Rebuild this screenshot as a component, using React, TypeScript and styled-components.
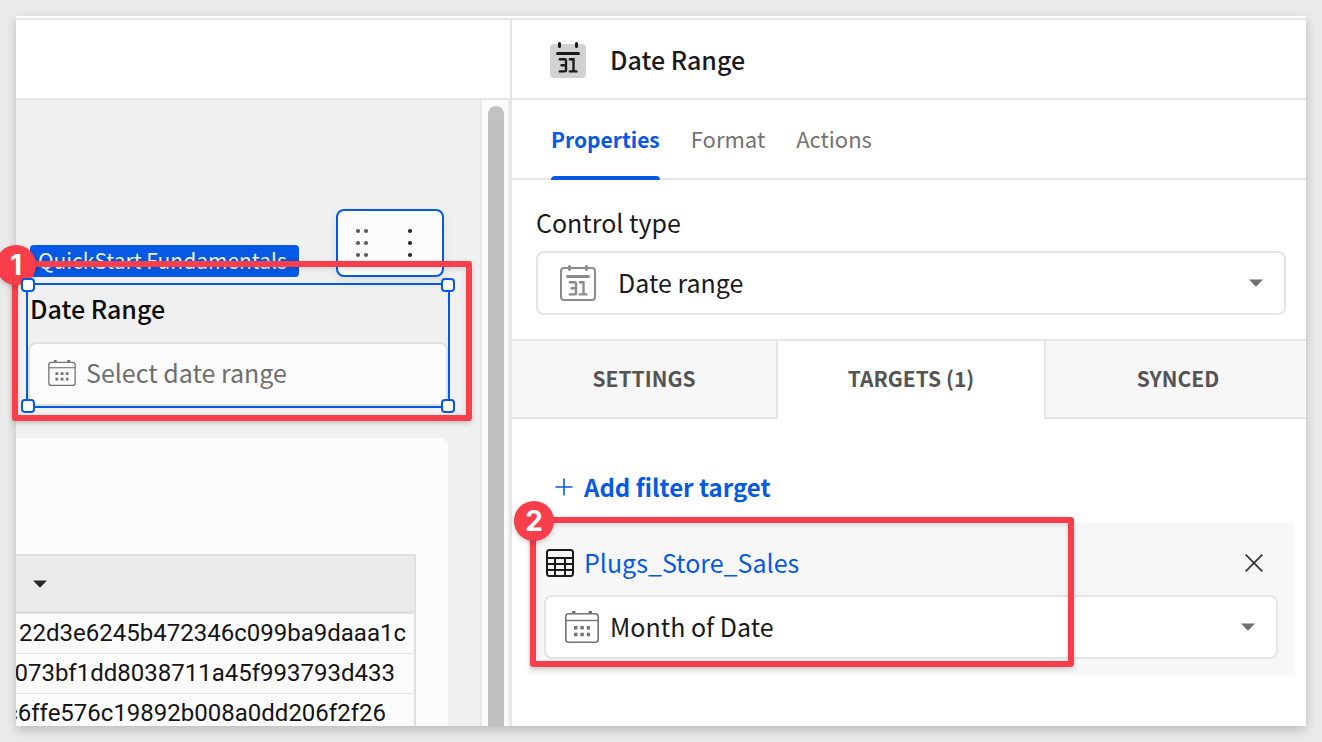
import React from 'react';
import styled, { createGlobalStyle, css } from 'styled-components';

const BLUE = '#0559e5';
const RED = '#f83e4b';
const LINE = '#e5e5e5';

const GlobalStyle = createGlobalStyle`
  *, *::before, *::after { box-sizing: border-box; }
  body {
    margin: 0;
    background: #eaeaea;
    color: #1a1a1a;
    font-family: "Noto Sans CJK SC", "Noto Sans", sans-serif;
    font-size: 25px;
    line-height: 36px;
  }
  button, input, select { font: inherit; color: inherit; margin: 0; }
  button { background: none; border: 0; padding: 0; cursor: pointer; }
  svg { display: block; flex: none; }
`;

const Page = styled.div`
  height: 100vh;
  padding: 16px;
  display: flex;
  flex-direction: column;
`;

const Frame = styled.div`
  flex: 1;
  min-height: 0;
  display: grid;
  grid-template-columns: 496px 1fr;
  padding-top: 2px;
  background: #fff;
  box-shadow: 0 4px 10px rgba(0, 0, 0, 0.2);
`;

const Workspace = styled.section`
  min-height: 0;
  display: flex;
  flex-direction: column;
  border-top: 2px solid ${LINE};
  border-right: 2px solid ${LINE};
`;

const TopBar = styled.header`
  flex: none;
  height: 80px;
  display: flex;
  align-items: center;
  gap: 24px;
  padding: 2px 38px 0;
  border-bottom: 2px solid ${LINE};
`;

const CanvasArea = styled.div`
  flex: 1;
  min-height: 0;
  display: flex;
`;

const Canvas = styled.div`
  flex: 1;
  min-width: 0;
  display: flex;
  flex-direction: column;
  padding-top: 109px;
  background: #f0f0f0;
`;

const ScrollTrack = styled.div`
  width: 30px;
  display: flex;
  padding: 6px 0 0 6px;
  background: #fafafa;
  border-left: 2px solid #e8e8e8;
  border-right: 2px solid #ededed;
`;

const ScrollThumb = styled.div`
  width: 16px;
  border-radius: 8px 8px 0 0;
  background: #c1c1c1;
`;

const WidgetHead = styled.div`
  display: flex;
  align-items: flex-end;
  justify-content: space-between;
  padding: 0 36px 0 14px;
`;

const ParentTag = styled.span`
  height: 32px;
  padding: 0 12px 0 8px;
  border-radius: 4px;
  background: ${BLUE};
  color: #e9f0fd;
  font-size: 21px;
  line-height: 31px;
`;

const WidgetTools = styled.div`
  width: 108px;
  height: 68px;
  display: flex;
  align-items: center;
  gap: 32px;
  padding-left: 16px;
  border: 2px solid ${BLUE};
  border-radius: 8px;
  background: #fbfbfb;
  box-shadow: 0 4px 12px rgba(0, 0, 0, 0.08);
`;

const Selection = styled.div`
  position: relative;
  height: 125px;
  margin: 6px 30px 30px 10px;
  border: 2px solid ${BLUE};
`;

const handlePlace = {
  tl: css`top: -7px; left: -7px;`,
  tr: css`top: -7px; right: -7px;`,
  bl: css`bottom: -7px; left: -7px;`,
  br: css`bottom: -7px; right: -7px;`,
};

const Handle = styled.span<{ $at: keyof typeof handlePlace }>`
  position: absolute;
  width: 14px;
  height: 14px;
  border: 2px solid ${BLUE};
  border-radius: 4px;
  background: #fff;
  ${(p) => handlePlace[p.$at]}
`;

const WidgetLabel = styled.label`
  display: block;
  height: 57px;
  padding: 5px 2px;
  color: #0c0c0c;
  font-weight: 500;
`;

const DateField = styled.div`
  height: 64px;
  display: flex;
  align-items: center;
  gap: 10px;
  padding: 0 18px 2px;
  border: 2px solid #e0e0e0;
  border-radius: 8px;
  background: #fbfbfb;
`;

const DateInput = styled.input`
  flex: 1;
  min-width: 0;
  padding: 0 0 2px;
  border: 0;
  outline: 0;
  background: none;
  &::placeholder { color: #6e6e6e; opacity: 1; }
`;

const TableCard = styled.div`
  flex: 1 1 0;
  min-height: 0;
  overflow: hidden;
  margin-right: 32px;
  padding: 116px 32px 0 0;
  border-radius: 0 8px 0 0;
  background: #fbfbfb;
`;

const DataTable = styled.table`
  width: 100%;
  table-layout: fixed;
  border-collapse: separate;
  border-spacing: 0;
  border-right: 2px solid #e0e0e0;
  font-family: Roboto, sans-serif;
  font-size: 24px;
  line-height: 38px;
`;

const HeadCell = styled.th`
  height: 60px;
  padding: 1px 0 0 17px;
  background: #ebebeb;
  border-top: 2px solid #e0e0e0;
  border-bottom: 3px solid #e0e0e0;
`;

const Cell = styled.td`
  height: 40px;
  padding: 0;
  vertical-align: top;
  border-bottom: 1px solid #e2e2e2;
`;

const CellText = styled.div<{ $end: number }>`
  display: flex;
  justify-content: flex-end;
  overflow: hidden;
  padding-right: ${(p) => p.$end}px;
  color: #141414;
`;

const Inspector = styled.aside`
  min-width: 0;
  display: flex;
  flex-direction: column;
  border-top: 2px solid ${LINE};
`;

const Title = styled.h1`
  margin: 0;
  padding-bottom: 2px;
  font-size: 25px;
  font-weight: 500;
  line-height: 36px;
`;

const Tabs = styled.nav`
  flex: none;
  height: 80px;
  display: flex;
  gap: 31px;
  padding: 0 39px;
  border-bottom: 2px solid ${LINE};
`;

const Tab = styled.button<{ $active?: boolean }>`
  position: relative;
  height: 80px;
  padding-bottom: ${(p) => (p.$active ? 3 : 5)}px;
  font-size: ${(p) => (p.$active ? 21 : 22)}px;
  color: ${(p) => (p.$active ? BLUE : '#737373')};
  font-weight: ${(p) => (p.$active ? 700 : 400)};
  &::after {
    content: '';
    display: ${(p) => (p.$active ? 'block' : 'none')};
    position: absolute;
    left: 0;
    right: 0;
    bottom: 0;
    height: 4px;
    border-radius: 4px 4px 0 0;
    background: ${BLUE};
  }
`;

const ControlSection = styled.div`
  display: flex;
  flex-direction: column;
  gap: 11px;
  padding: 24px 20px 24px 24px;
`;

const SelectBox = styled.div<{ $wide?: boolean }>`
  height: 64px;
  display: flex;
  align-items: center;
  gap: ${(p) => (p.$wide ? 22 : 11)}px;
  padding: 0 21px 0 ${(p) => (p.$wide ? 22 : 19)}px;
  border: 2px solid ${LINE};
  border-radius: 8px;
  background: #fff;
`;

const Select = styled.select`
  flex: 1;
  min-width: 0;
  appearance: none;
  padding: 0 0 2px;
  border: 0;
  outline: 0;
  background: none;
`;

const SegmentClip = styled.div`
  overflow: hidden;
`;

const Segments = styled.div`
  width: calc(100% + 4px);
  display: grid;
  grid-template-columns: repeat(3, 1fr);
`;

const Segment = styled.button<{ $state: 'before' | 'active' | 'after' }>`
  height: 80px;
  padding-bottom: 2px;
  border: 0 solid ${LINE};
  border-top-width: 2px;
  color: #545454;
  font-size: 21px;
  font-weight: 700;
  ${(p) => (p.$state === 'active'
    ? css`padding-bottom: 4px;`
    : css`
        background: #f7f7f7;
        border-bottom-width: 2px;
      `)}
  ${(p) => p.$state === 'before' && css`border-right-width: 2px;`}
  ${(p) => p.$state === 'after' && css`border-left-width: 2px;`}
`;

const AddTarget = styled.button`
  align-self: flex-start;
  display: flex;
  align-items: center;
  gap: 11px;
  margin: 50px 0 18px 43px;
  color: ${BLUE};
  font-size: 24px;
  font-weight: 700;
`;

const TargetCard = styled.div`
  position: relative;
  height: 152px;
  margin: 0 12px 0 16px;
  padding: 22px 16px 16px;
  background: #f7f7f7;
`;

const TargetHead = styled.div`
  display: flex;
  align-items: center;
  gap: 10px;
  height: 36px;
  margin-bottom: 14px;
  padding: 0 14px 0 2px;
`;

const SourceLink = styled.a`
  flex: 1;
  padding-bottom: 2px;
  color: ${BLUE};
  text-decoration: none;
`;

const Callout = styled.div`
  position: absolute;
  border: 6px solid ${RED};
  border-radius: 3px;
  box-shadow: 0 2px 5px rgba(0, 0, 0, 0.2), inset 0 2px 5px rgba(0, 0, 0, 0.12);
  pointer-events: none;
`;

const WidgetCallout = styled(Callout)`
  inset: -24px -24px -15px -16px;
`;

const TargetCallout = styled(Callout)`
  top: -6px;
  left: 2px;
  width: 544px;
  height: 150px;
`;

const Badge = styled.span`
  position: absolute;
  top: -22px;
  left: -22px;
  width: 40px;
  height: 40px;
  border-radius: 50%;
  background: ${RED};
  box-shadow: 0 2px 5px rgba(0, 0, 0, 0.2);
  color: #fff;
  font-family: Inter, sans-serif;
  font-size: 28px;
  font-weight: 700;
  line-height: 40px;
  text-align: center;
`;

function DayCalendarIcon({ solid }: { solid?: boolean }) {
  const ink = solid ? '#1a1a1a' : '#8c8c8c';
  return (
    <svg width="36" height="36" viewBox="0 0 36 36" fill="none" aria-hidden="true">
      {solid ? (
        <rect y="2" width="36" height="34" rx="4" fill="#d1d1d1" />
      ) : (
        <rect x="1" y="3" width="34" height="32" rx="3" stroke={ink} strokeWidth="2" />
      )}
      <path d="M9.5 1.5v3M26.5 1.5v3" stroke={ink} strokeWidth="3" strokeLinecap="round" />
      <path d="M7.5 11.4h21" stroke={ink} strokeWidth="3" strokeLinecap="round" />
      <path
        d="M9.8 17.2h5q1.2 0 1.2 1.2v9.800q0 1.200-1.200 1.200H9.800M11.500 23.200h4.500M19.800 17.200h3.700v12.200M19.800 29.400h6.600"
        stroke={ink}
        strokeWidth="2.4"
        strokeLinecap="round"
      />
    </svg>
  );
}

function GridCalendarIcon({ width, height }: { width: number; height: number }) {
  return (
    <svg width={width} height={height} viewBox="0 0 34 32" fill="none" aria-hidden="true">
      <rect x="0.8" y="2.8" width="32.4" height="28.4" rx="3" stroke="#737373" strokeWidth="1.6" />
      <path d="M1 9.5h32" stroke="#737373" strokeWidth="1.4" />
      <path d="M7 1.5h3.5M23.5 1.5h3.5" stroke="#737373" strokeWidth="3" />
      <path d="M9 16.7h16M9 23.5h16" stroke="#737373" strokeWidth="3.4" strokeDasharray="3.4 3" />
    </svg>
  );
}

function TableIcon() {
  return (
    <svg width="28" height="28" viewBox="0 0 28 28" fill="none" stroke="#1a1a1a" strokeWidth="2" aria-hidden="true">
      <rect x="1" y="1" width="26" height="26" rx="2.5" />
      <path d="M1 9h26M1 15h26M1 21h26M9 9v18M19 9v18" />
    </svg>
  );
}

function Caret({ color = '#6e6e6e' }: { color?: string }) {
  return (
    <svg width="14" height="8" viewBox="0 0 14 8" aria-hidden="true">
      <path d="M0 0.5h14L7.8 7q-.8.7-1.6 0z" fill={color} />
    </svg>
  );
}

const dotRows = [4, 16, 28];

function DotGrid({ columns, color }: { columns: number[]; color: string }) {
  return (
    <svg width="16" height="32" viewBox="0 0 16 32" fill={color} aria-hidden="true">
      {columns.map((x) => dotRows.map((y) => <circle key={`${x}-${y}`} cx={x} cy={y} r="2.1" />))}
    </svg>
  );
}

const rows = [
  { text: '22d3e6245b472346c099ba9daaa1c', end: 8 },
  { text: '073bf1dd8038711a45f993793d433', end: 19 },
  { text: 'c6ffe576c19892b008a0dd206f2f26', end: 28 },
];

export default function App() {
  return (
    <>
      <GlobalStyle />
      <Page>
        <Frame>
          <Workspace>
            <TopBar />
            <CanvasArea>
              <Canvas>
                <WidgetHead>
                  <ParentTag>QuickStart Fundamentals</ParentTag>
                  <WidgetTools>
                    <button type="button" aria-label="Move element">
                      <DotGrid columns={[4, 12]} color="#5c5c5c" />
                    </button>
                    <button type="button" aria-label="More options">
                      <DotGrid columns={[8]} color="#262626" />
                    </button>
                  </WidgetTools>
                </WidgetHead>
                <Selection>
                  <WidgetLabel htmlFor="date-range">Date Range</WidgetLabel>
                  <DateField>
                    <GridCalendarIcon width={28} height={26} />
                    <DateInput id="date-range" type="text" placeholder="Select date range" />
                  </DateField>
                  <WidgetCallout>
                    <Badge>1</Badge>
                  </WidgetCallout>
                  <Handle $at="tl" />
                  <Handle $at="tr" />
                  <Handle $at="bl" />
                  <Handle $at="br" />
                </Selection>
                <TableCard>
                  <DataTable>
                    <thead>
                      <tr>
                        <HeadCell aria-label="Column menu">
                          <Caret color="#262626" />
                        </HeadCell>
                      </tr>
                    </thead>
                    <tbody>
                      {rows.map((row) => (
                        <tr key={row.text}>
                          <Cell>
                            <CellText $end={row.end}>{row.text}</CellText>
                          </Cell>
                        </tr>
                      ))}
                    </tbody>
                  </DataTable>
                </TableCard>
              </Canvas>
              <ScrollTrack>
                <ScrollThumb />
              </ScrollTrack>
            </CanvasArea>
          </Workspace>
          <Inspector>
            <TopBar>
              <DayCalendarIcon solid />
              <Title>Date Range</Title>
            </TopBar>
            <Tabs>
              <Tab type="button" $active>Properties</Tab>
              <Tab type="button">Format</Tab>
              <Tab type="button">Actions</Tab>
            </Tabs>
            <ControlSection>
              <label htmlFor="control-type">Control type</label>
              <SelectBox $wide>
                <DayCalendarIcon />
                <Select id="control-type">
                  <option>Date range</option>
                </Select>
                <Caret />
              </SelectBox>
            </ControlSection>
            <SegmentClip>
              <Segments>
                <Segment type="button" $state="before">SETTINGS</Segment>
                <Segment type="button" $state="active">TARGETS (1)</Segment>
                <Segment type="button" $state="after">SYNCED</Segment>
              </Segments>
            </SegmentClip>
            <AddTarget type="button">
              <svg width="18" height="18" viewBox="0 0 18 18" stroke={BLUE} strokeWidth="1.6" aria-hidden="true">
                <path d="M9 0.5v17M0.5 9h17" />
              </svg>
              Add filter target
            </AddTarget>
            <TargetCard>
              <TargetHead>
                <TableIcon />
                <SourceLink href="#source">Plugs_Store_Sales</SourceLink>
                <button type="button" aria-label="Remove target">
                  <svg width="20" height="20" viewBox="0 0 20 20" stroke="#333" strokeWidth="1.7" aria-hidden="true">
                    <path d="M1.7 1.7l16.6 16.6M18.3 1.7L1.7 18.3" />
                  </svg>
                </button>
              </TargetHead>
              <SelectBox>
                <GridCalendarIcon width={34} height={32} />
                <Select aria-label="Target column">
                  <option>Month of Date</option>
                </Select>
                <Caret />
              </SelectBox>
              <TargetCallout>
                <Badge>2</Badge>
              </TargetCallout>
            </TargetCard>
          </Inspector>
        </Frame>
      </Page>
    </>
  );
}
